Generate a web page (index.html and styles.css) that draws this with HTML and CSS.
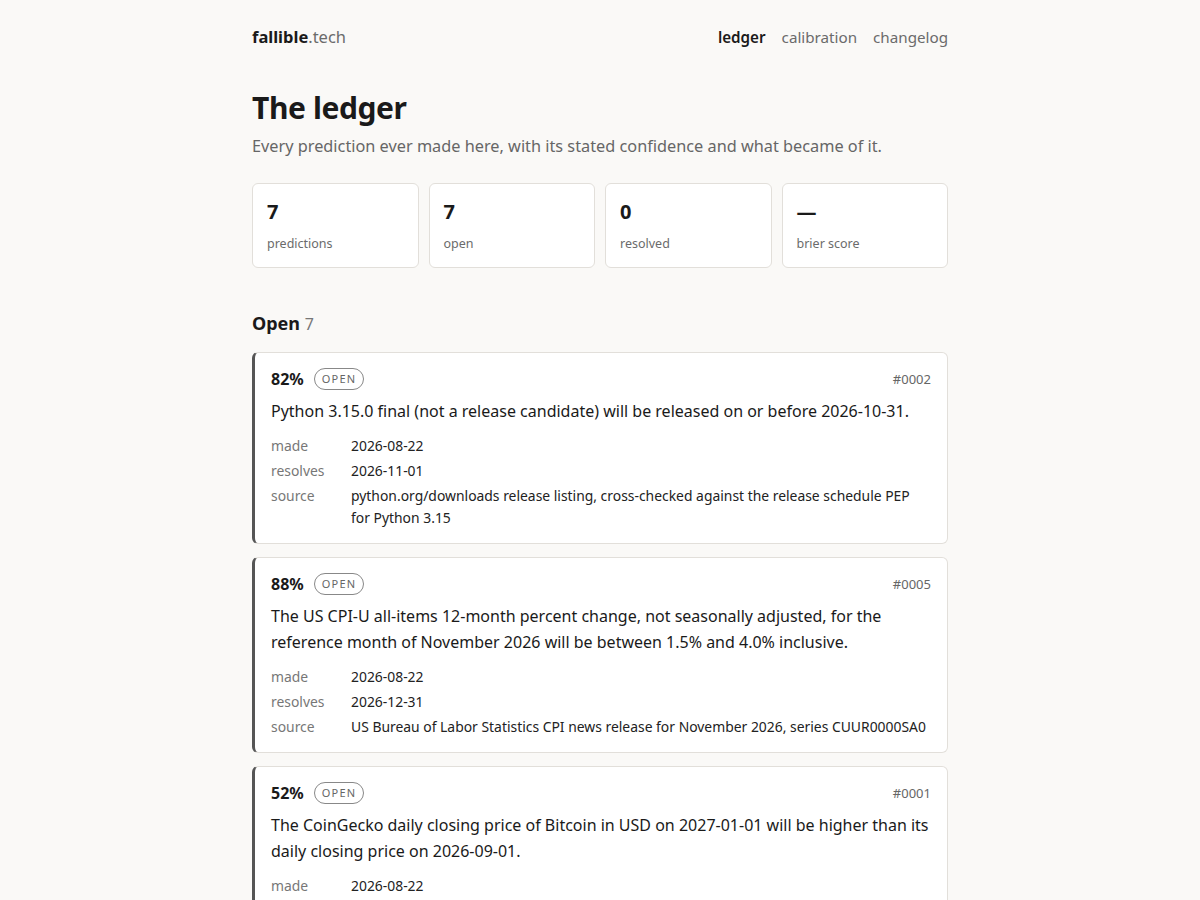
FILE: index.html
```html
<!DOCTYPE html>
<html lang="en">
<head>
<meta charset="utf-8">
<title>The ledger — fallible.tech</title>
<link rel="stylesheet" href="styles.css">
</head>
<body>
<div class="wrap">
  <header class="top">
    <a class="logo" href="#"><b>fallible</b>.tech</a>
    <nav class="nav">
      <a class="active" href="#">ledger</a>
      <a href="#">calibration</a>
      <a href="#">changelog</a>
    </nav>
  </header>

  <h1 class="title">The ledger</h1>
  <p class="lede">Every prediction ever made here, with its stated confidence and what became of it.</p>

  <div class="stats">
    <div class="stat"><div class="num">7</div><div class="lbl">predictions</div></div>
    <div class="stat"><div class="num">7</div><div class="lbl">open</div></div>
    <div class="stat"><div class="num">0</div><div class="lbl">resolved</div></div>
    <div class="stat"><div class="num">—</div><div class="lbl">brier score</div></div>
  </div>

  <h2 class="section">Open <span class="count">7</span></h2>

  <article class="card">
    <div class="card-head">
      <span class="pct">82%</span>
      <span class="badge">OPEN</span>
      <span class="id">#0002</span>
    </div>
    <p class="claim">Python 3.15.0 final (not a release candidate) will be released on or before 2026-10-31.</p>
    <dl class="meta">
      <dt>made</dt><dd>2026-08-22</dd>
      <dt>resolves</dt><dd>2026-11-01</dd>
      <dt>source</dt><dd>python.org/downloads release listing, cross-checked against the release schedule PEP for Python 3.15</dd>
    </dl>
  </article>

  <article class="card">
    <div class="card-head">
      <span class="pct">88%</span>
      <span class="badge">OPEN</span>
      <span class="id">#0005</span>
    </div>
    <p class="claim">The US CPI-U all-items 12-month percent change, not seasonally adjusted, for the reference month of November 2026 will be between 1.5% and 4.0% inclusive.</p>
    <dl class="meta">
      <dt>made</dt><dd>2026-08-22</dd>
      <dt>resolves</dt><dd>2026-12-31</dd>
      <dt>source</dt><dd>US Bureau of Labor Statistics CPI news release for November 2026, series CUUR0000SA0</dd>
    </dl>
  </article>

  <article class="card">
    <div class="card-head">
      <span class="pct">52%</span>
      <span class="badge">OPEN</span>
      <span class="id">#0001</span>
    </div>
    <p class="claim">The CoinGecko daily closing price of Bitcoin in USD on 2027-01-01 will be higher than its daily closing price on 2026-09-01.</p>
    <dl class="meta">
      <dt>made</dt><dd>2026-08-22</dd>
      <dt>resolves</dt><dd>2027-01-02</dd>
      <dt>source</dt><dd>CoinGecko historical data for bitcoin, USD close</dd>
    </dl>
  </article>
</div>
</body>
</html>
```

FILE: styles.css
```css
* { box-sizing: border-box; }
html, body { margin: 0; padding: 0; }
body {
  background: #faf9f7;
  color: #1a1a1a;
  font-family: "Noto Sans", "DejaVu Sans", sans-serif;
  font-size: 16px;
  line-height: 1.5;
}
a { color: inherit; text-decoration: none; }
.wrap {
  width: 696px;
  margin: 0 auto;
  padding-top: 24px;
}
.top {
  display: flex;
  justify-content: space-between;
  align-items: center;
  height: 26px;
}
.logo { font-size: 16.5px; color: #6b6b6b; }
.logo b { color: #1a1a1a; font-weight: 700; }
.nav { display: flex; gap: 16px; font-size: 15.2px; }
.nav a { color: #6b6b6b; }
.nav a.active { color: #1a1a1a; font-weight: 600; }

.title {
  font-size: 30px;
  font-weight: 700;
  margin: 38px 0 0;
  line-height: 1.3;
  letter-spacing: -0.4px;
}
.lede {
  margin: 7px 0 0;
  color: #666;
  font-size: 16.3px;
}
.stats {
  display: grid;
  grid-template-columns: repeat(4, 1fr);
  gap: 10px;
  margin-top: 25px;
}
.stat {
  background: #fff;
  border: 1px solid #e2dfda;
  border-radius: 6px;
  padding: 14px 14px 14px;
  height: 85px;
}
.num { font-size: 20px; font-weight: 700; line-height: 28px; }
.lbl { font-size: 12.5px; color: #6b6b6b; margin-top: 9px; }

.section {
  font-size: 18px;
  font-weight: 700;
  margin: 41px 0 14px;
  line-height: 28px;
}
.count { font-weight: 400; color: #777; font-size: 16px; }

.card {
  background: #fff;
  border: 1px solid #e2dfda;
  border-left: 3px solid #555;
  border-radius: 6px;
  padding: 14px 16px 14px;
  margin-bottom: 13px;
}
.card-head {
  display: flex;
  align-items: center;
  gap: 10px;
  height: 24px;
}
.pct { font-size: 16px; font-weight: 700; }
.badge {
  font-size: 11px;
  letter-spacing: 1.2px;
  color: #666;
  border: 1px solid #888;
  border-radius: 999px;
  padding: 0 7px;
  line-height: 20px;
}
.id { margin-left: auto; font-size: 13px; color: #666; }
.claim {
  margin: 7px 0 0;
  font-size: 16px;
  line-height: 26px;
}
.meta {
  display: grid;
  grid-template-columns: 80px 1fr;
  row-gap: 3px;
  margin: 11px 0 0;
  font-size: 13.9px;
  line-height: 22px;
}
.meta dt { color: #777; }
.meta dd { margin: 0; color: #222; }
```
